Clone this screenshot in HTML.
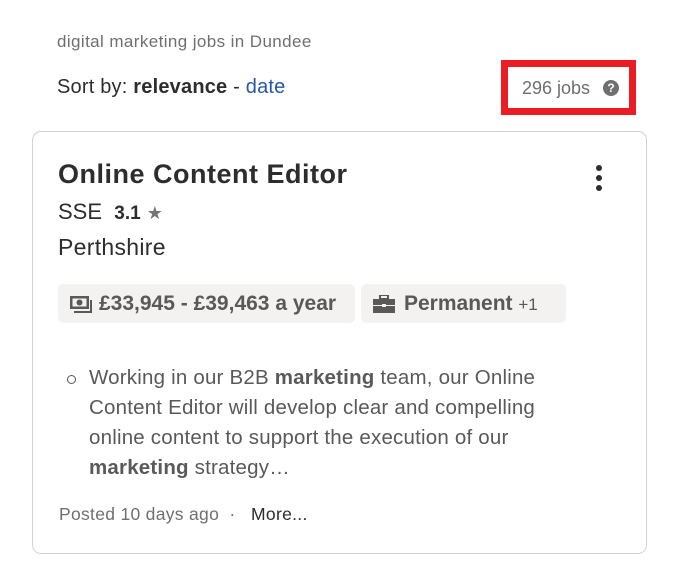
<!DOCTYPE html>
<html><head><style>
body{margin:0;width:680px;height:564px;background:#fff;font-family:"Liberation Sans",sans-serif;position:relative;overflow:hidden}
.a{position:absolute;white-space:nowrap}
.card{position:absolute;left:32px;top:131px;width:613px;height:421px;border:1px solid #d4d2d0;border-radius:9px}
.tag{position:absolute;top:284px;height:39px;background:#f3f2f1;border-radius:6px;font-weight:bold;font-size:21px;color:#595959;line-height:39px}
</style></head><body>
<div class="a" style="left:57px;top:32px;font-size:17px;letter-spacing:0.4px;color:#6f6f6f">digital marketing jobs in Dundee</div>
<div class="a" style="left:57px;top:76px;font-size:20px;letter-spacing:0.2px;color:#2d2d2d">Sort by: <b>relevance</b> - <span style="color:#2557a7">date</span></div>
<div class="a" style="left:501px;top:60px;width:121px;height:41px;border:7px solid #ec1c24"></div>
<div class="a" style="left:522px;top:78px;font-size:18px;color:#6f6f6f">296 jobs</div>
<div class="a" style="left:603px;top:80px;width:16px;height:16px;border-radius:50%;background:#6f6f6f;color:#fff;font-size:12px;font-weight:bold;text-align:center;line-height:16px">?</div>
<div class="card"></div>
<div class="a" style="left:58px;top:159px;font-size:27px;letter-spacing:0.5px;font-weight:bold;color:#2d2d2d">Online Content Editor</div>
<div class="a" style="left:596px;top:165px;width:8px">
<div style="width:6px;height:6px;border-radius:50%;background:#2d2d2d;margin-bottom:4px"></div>
<div style="width:6px;height:6px;border-radius:50%;background:#2d2d2d;margin-bottom:4px"></div>
<div style="width:6px;height:6px;border-radius:50%;background:#2d2d2d"></div></div>
<div class="a" style="left:58px;top:199px;font-size:22px;color:#2d2d2d">SSE&nbsp; <b style="font-size:19px">3.1</b> <span style="color:#767676;font-size:18px">★</span></div>
<div class="a" style="left:58px;top:234px;font-size:23px;letter-spacing:0.3px;color:#2d2d2d">Perthshire</div>
<div class="tag" style="left:58px;width:297px"><svg style="position:absolute;left:11px;top:10px" width="24" height="20" viewBox="0 0 24 20"><rect x="1" y="2" width="19" height="13" fill="#595959"/><rect x="3.5" y="4.5" width="14" height="8" fill="#f3f2f1"/><circle cx="10.5" cy="8.5" r="3" fill="#595959"/><path d="M22 6v12H5" stroke="#595959" stroke-width="2" fill="none"/></svg><span style="position:absolute;left:41px">£33,945 - £39,463 a year</span></div>
<div class="tag" style="left:361px;width:205px"><svg style="position:absolute;left:12px;top:11px" width="22" height="18" viewBox="0 0 22 18"><rect x="7" y="0" width="8" height="4" fill="none" stroke="#595959" stroke-width="2"/><rect x="0" y="4" width="22" height="6" fill="#595959"/><rect x="0" y="11" width="22" height="7" fill="#595959"/><rect x="9" y="9" width="4" height="3" fill="#f3f2f1"/></svg><span style="position:absolute;left:43px">Permanent <span style="font-weight:normal;font-size:17px">+1</span></span></div>
<div class="a" style="left:67px;top:375px;width:9px;height:9px;border:1.5px solid #595959;border-radius:50%;box-sizing:border-box"></div>
<div class="a" style="left:89px;top:363px;font-size:20.5px;letter-spacing:0.2px;line-height:30px;color:#595959;white-space:normal;width:485px">Working in our B2B <b>marketing</b> team, our Online Content Editor will develop clear and compelling online content to support the execution of our <b>marketing</b> strategy…</div>
<div class="a" style="left:59px;top:504px;font-size:17.5px;letter-spacing:0.3px;color:#6f6f6f">Posted 10 days ago &nbsp;·&nbsp; &nbsp;<span style="color:#2d2d2d">More...</span></div>
</body></html>
